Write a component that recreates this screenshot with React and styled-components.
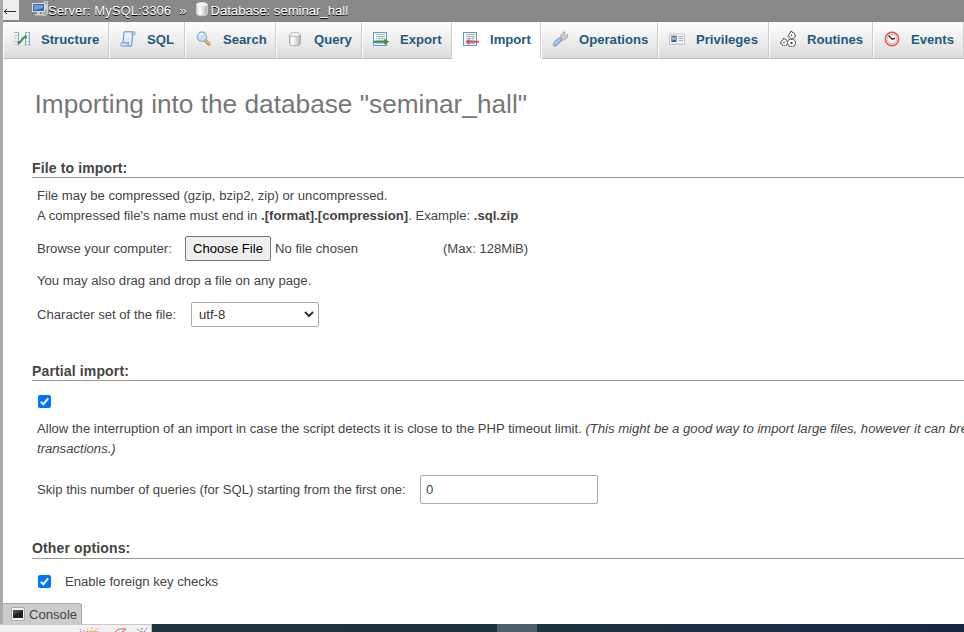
import React from "react";
import styled, { createGlobalStyle } from "styled-components";

const Global = createGlobalStyle`
  * { box-sizing: border-box; }
  html, body { margin: 0; padding: 0; overflow: hidden; background: #fff; }
  body { font-family: "Liberation Sans", Arial, sans-serif; font-size: 13.12px; color: #444; }
`;

const Page = styled.div`
  width: 964px;
  height: 632px;
  display: flex;
  flex-direction: column;
  overflow: hidden;
`;
const Frame = styled.div`
  height: 624px;
  flex: none;
  display: flex;
  flex-direction: column;
  border-left: 3px solid #aaa;
  overflow: hidden;
`;
const ServerBar = styled.header`
  height: 22px;
  flex: none;
  display: flex;
  align-items: flex-start;
  background: #888;
  color: #fff;
  text-shadow: 0 1px 0 #000;
`;
const Back = styled.span`
  width: 16px;
  height: 20px;
  background: #eee;
  display: flex;
  align-items: center;
  justify-content: flex-start;
  padding-top: 3px;
`;
const Crumb = styled.span`
  display: flex;
  align-items: flex-start;
  margin-left: ${(p) => p.$gap}px;
  line-height: 21px;
  letter-spacing: ${(p) => p.$track || 0}px;
  white-space: nowrap;
  svg { margin-top: 1px; flex: none; }
`;
const Tabs = styled.nav`
  height: 37px;
  flex: none;
  display: flex;
`;
const Tab = styled.a`
  width: ${(p) => p.$w}px;
  flex: none;
  display: flex;
  align-items: center;
  gap: 11px;
  padding: 0 0 2px 10px;
  border-left: 1px solid #fff;
  border-right: 1px solid #ccc;
  border-bottom: 1px solid ${(p) => (p.$active ? "#fff" : "#bbb")};
  background: ${(p) => (p.$active ? "#fff" : "linear-gradient(#fff, #dcdcdc)")};
  color: #235a81;
  font-weight: bold;
  white-space: nowrap;
  svg { flex: none; width: 16px; }
`;
const Content = styled.main`
  flex: 1;
  display: flex;
  flex-direction: column;
  padding-left: 29px;
  white-space: nowrap;
`;
const Title = styled.h2`
  margin: 29px 0 0 2.5px;
  height: 32px;
  line-height: 32px;
  font-size: 26.24px;
  font-weight: normal;
  color: #777;
`;
const Section = styled.h3`
  margin: ${(p) => p.$top}px 0 0;
  height: ${(p) => p.$h || 19}px;
  line-height: 18px;
  font-size: 14px;
  letter-spacing: 0.14px;
  color: #444;
  border-bottom: 1px solid #999;
`;
const Row = styled.div`
  display: flex;
  align-items: center;
  height: ${(p) => p.$h || 20}px;
  margin: ${(p) => p.$top || 0}px 0 0 5px;
`;
const Text = styled.span`
  width: ${(p) => (p.$w ? `${p.$w}px` : "auto")};
  flex: none;
`;
const FileButton = styled.button`
  width: 86px;
  height: 25px;
  padding: 0;
  margin-right: 4px;
  border: 1px solid #767676;
  border-radius: 2px;
  background: #efefef;
  color: #000;
  font: 13.12px "Liberation Sans", Arial, sans-serif;
`;
const SelectBox = styled.div`
  width: 128px;
  height: 25px;
  display: flex;
  align-items: center;
  justify-content: space-between;
  padding: 0 3px 0 7px;
  border: 1px solid #aaa;
  border-radius: 2px;
  color: #333;
  svg { margin-bottom: 1px; }
`;
const NumberInput = styled.input`
  width: 178px;
  height: 29px;
  padding: 0 5px;
  border: 1px solid #aaa;
  border-radius: 2px;
  font: 13.12px "Liberation Sans", Arial, sans-serif;
  color: #444;
`;
const CheckMark = styled.span`
  width: 13px;
  height: 13px;
  margin: 0 14px 0 1px;
  display: flex;
  border-radius: 2px;
  background: #0075ff;
`;
const Console = styled.footer`
  width: 79px;
  height: 21px;
  flex: none;
  display: flex;
  align-items: center;
  padding-left: 8px;
  gap: 4px;
  background: #ccc;
  border-top: 1px solid #aaa;
  border-right: 1px solid #aaa;
  border-radius: 0 3px 0 0;
  white-space: nowrap;
`;
const Taskbar = styled.div`
  height: 8px;
  flex: none;
  display: flex;
  background: linear-gradient(90deg, #1f3640 0, #1c3340 60%, #192b45 90%, #18263f);
`;
const SearchStrip = styled.div`
  width: 152px;
  height: 8px;
  background: #f1f1f1;
  border-top: 1px solid #c8c8c8;
  border-right: 1px solid #bbb;
  svg { display: block; margin-left: 76px; }
`;
const ActiveTask = styled.div`
  width: 40px;
  margin-left: 345px;
  background: #4c5f68;
`;

const Icon = ({ children, w = 16, h = 16, box }) => (
  <svg width={w} height={h} viewBox={box || `0 0 ${w} ${h}`} fill="none">{children}</svg>
);

const Cylinder = ({ light }) => (
  <Icon>
    <defs>
      <linearGradient id="metal" x1="0" x2="1">
        <stop offset="0" stopColor="#d5d5d5" /><stop offset=".3" stopColor="#fff" />
        <stop offset=".65" stopColor="#d8d8d8" /><stop offset="1" stopColor="#aaa" />
      </linearGradient>
    </defs>
    <path d="M2.500 3.500v9c0 3 11 3 11 0v-9z" fill="url(#metal)" stroke={light ? "#ccc" : "#aaa"} />
    <ellipse cx="8" cy="3.500" rx="5.500" ry="2" fill="#f4f4f4" stroke={light ? "#ddd" : "#b5b5b5"} />
  </Icon>
);
const ServerIcon = () => (
  <Icon>
    <path d="M10.500 2.500l2-2h3v12l-2 2h-3z" fill="#aaa" stroke="#ccc" />
    <path d="M12 4h3M12 6h3M12 8h3" stroke="#eee" />
    <rect x=".5" y="2.500" width="12" height="8" fill="#3569b0" stroke="#ddd" />
    <path d="M2 4h9v3L2 9z" fill="#6f9ed8" />
    <path d="M5 11h3v2H5zM3 13h7v1.500H3z" fill="#ccc" />
  </Icon>
);
const StructureIcon = () => (
  <Icon>
    <path d="M0 1.500h4.500M11.500 1.500H16" stroke="#8dc872" />
    <path d="M0 4.500h4M0 7.500h4M0 10.500h4M0 13.500h4M12 4.500h4M12 7.500h4M12 10.500h4M12 13.500h4" stroke="#b9cfeb" />
    <path d="M4.500 1v14M11.500 1v14M15.500 1v14" stroke="#86a9d6" />
    <path d="M4.500 11.500c4 0 3-5.500 7-5.500" stroke="#42934b" strokeWidth="2.200" />
    <circle cx="5" cy="11.500" r="1.600" fill="#42934b" /><circle cx="11.500" cy="6" r="1.600" fill="#42934b" />
  </Icon>
);
const SqlIcon = () => (
  <Icon>
    <path d="M4 .8h9.500c2.300 0 2 3.200 0 3.200h-.8l-1.200 11H2.200c-2.300 0-2-3.200 0-3.200H3z" fill="#dcecfb" stroke="#5b91cf" />
    <path d="M3 11.800h6c-1.200 1-1 2.500.5 3.200M13 1c-1.500 1-1 3 .5 3" fill="#b8d6f3" stroke="#5b91cf" />
    <path d="M5 3h5M5 5h6" stroke="#fff" />
  </Icon>
);
const SearchIcon = () => (
  <Icon>
    <path d="M9.500 9.500l3.500 3.500" stroke="#c38d4c" strokeWidth="3.400" strokeLinecap="round" />
    <path d="M10 9.500l3.500 3.500" stroke="#efc07a" strokeWidth="1.500" strokeLinecap="round" />
    <circle cx="6" cy="5.700" r="4.700" fill="#c5def7" stroke="#8bb5e4" strokeWidth="1.300" />
    <path d="M3.500 5c.6-2 2-2.500 3.500-2.200" stroke="#fff" strokeWidth="1.500" />
  </Icon>
);
const TransferIcon = ({ incoming }) => (
  <Icon>
    <rect x=".5" y="1.500" width="13" height="13" fill="#f1f7ff" stroke="#6794d4" />
    <path d="M3 3.500h9M3 5.500h9" stroke="#96c58a" />
    <path d="M3 7.500h9M3 9.500h9M3 12.500h9M6.500 6v7M9.500 6v7" stroke="#a9c6e9" />
    {incoming ? (
      <path d="M2.500 10.700L6.500 7.500V9.800H16v2H6.500v2.300z" fill="#f04a4e" />
    ) : (
      <path d="M1 9.800h10.500V7.500l4.500 3.300-4.500 3.300v-2.300H1z" fill="#3f8b38" />
    )}
  </Icon>
);
const WrenchIcon = () => (
  <Icon>
    <path d="M8 8L9 3.500 12 1h1.500L12 3.800l1.300 1.300L16 3v3l-3 2.500-3 .7z" fill="#ccc" stroke="#a0a0a0" strokeWidth=".8" />
    <path d="M3.200 13.200l4.500-4.500" stroke="#6c91d7" strokeWidth="4.600" strokeLinecap="round" />
    <path d="M3 13l4.700-4.500" stroke="#a9c7f5" strokeWidth="2.800" strokeLinecap="round" />
  </Icon>
);
const CardIcon = () => (
  <Icon>
    <rect x=".5" y="3" width="15" height="10.500" fill="#f7f7f7" stroke="#c8c8c8" />
    <rect x="2" y="4.500" width="6" height="6.500" fill="#6aa2df" />
    <circle cx="5" cy="7" r="1.600" fill="#ecc19b" /><path d="M3 11c0-3 4-3 4 0z" fill="#285b9e" /><path d="M3.500 6.500c0-2 3-2 3 0" fill="#755038" />
    <path d="M9.500 5.500H14M9.500 7.500H14M9.500 9.500H14" stroke="#91b2d7" />
    <path d="M2 12.500h12" stroke="#ddd" />
  </Icon>
);
const GearsIcon = () => (
  <Icon>
    <g fill="#fff" stroke="#555" strokeWidth="1" strokeDasharray="1.500 .6">
      <path d="M10.500.5h2V2h2v2h1v2h-1.500v1.500h-4V6H8V4h1.500V2h1z" />
      <path d="M3 7.500h2V9h2v2h1v2H6.500v1.500h-4V13H.5v-2H2V9h1z" />
      <path d="M9 8.500h5V10h1.500v4H14v1.500H9V14H7.500v-4H9z" />
    </g>
    <g fill="#444"><path d="M10.500 4.500l1-1 1 1-1 1zM3 11.500l1-1 1 1-1 1z" /><path d="M10.500 11h2v2h-2z" /></g>
  </Icon>
);
const ClockIcon = () => (
  <Icon>
    <circle cx="8" cy="8" r="6.700" fill="#f3f3f3" stroke="#e65353" strokeWidth="1.500" />
    <circle cx="8" cy="8" r="4.800" stroke="#bbb" />
    <path d="M4.500 4.500L8 8l3-.5" stroke="#333" strokeWidth="1.300" /><circle cx="8.500" cy="8" r="1" fill="#b33" />
  </Icon>
);
const Check = () => (
  <CheckMark role="checkbox" aria-checked="true">
    <Icon w={13} h={13}><path d="M2.800 6.900l2.400 2.400 5-6" stroke="#fff" strokeWidth="2" /></Icon>
  </CheckMark>
);

const tabs = [
  ["Structure", 106, StructureIcon],
  ["SQL", 76, SqlIcon],
  ["Search", 91, SearchIcon],
  ["Query", 86, Cylinder],
  ["Export", 90, TransferIcon],
  ["Import", 89, TransferIcon],
  ["Operations", 117, WrenchIcon],
  ["Privileges", 111, CardIcon],
  ["Routines", 104, GearsIcon],
  ["Events", 91, ClockIcon],
];

export default function App() {
  return (
    <>
      <Global />
      <Page>
        <Frame>
          <ServerBar>
            <Back><Icon w={15} h={12}><path d="M1 5.500h12M4 3L1.200 5.500 4 8" stroke="#333" /></Icon></Back>
            <Crumb $gap={13} $track={0.04}><ServerIcon />Server: MySQL:3306</Crumb>
            <Crumb $gap={8}>»</Crumb>
            <Crumb $gap={8}><Cylinder light />Database: seminar_hall</Crumb>
          </ServerBar>
          <Tabs>
            {tabs.map(([name, width, Glyph]) => (
              <Tab key={name} $w={width} $active={name === "Import"}>
                <Glyph incoming={name === "Import"} />{name}
              </Tab>
            ))}
          </Tabs>
          <Content>
            <Title>Importing into the database "seminar_hall"</Title>
            <Section $top={39}>File to import:</Section>
            <Row $top={7}><Text>File may be compressed (gzip, bzip2, zip) or uncompressed.</Text></Row>
            <Row><Text>A compressed file's name must end in <b>.[format].[compression]</b>. Example: <b>.sql.zip</b></Text></Row>
            <Row $top={11} $h={25}>
              <Text $w={148}>Browse your computer:</Text>
              <FileButton>Choose File</FileButton>
              <Text $w={168}>No file chosen</Text>
              <Text>(Max: 128MiB)</Text>
            </Row>
            <Row $top={9}><Text>You may also drag and drop a file on any page.</Text></Row>
            <Row $top={12} $h={25}>
              <Text $w={154}>Character set of the file:</Text>
              <SelectBox>utf-8<Icon w={12} h={12}><path d="M2 4l4 4 4-4" stroke="#333" strokeWidth="2" /></Icon></SelectBox>
            </Row>
            <Section $top={35}>Partial import:</Section>
            <Row $top={14} $h={13}><Check /></Row>
            <Row $top={10}><Text>Allow the interruption of an import in case the script detects it is close to the PHP timeout limit. <i>(This might be a good way to import large files, however it can break</i></Text></Row>
            <Row><Text><i>transactions.)</i></Text></Row>
            <Row $top={17} $h={29}>
              <Text $w={383}>Skip this number of queries (for SQL) starting from the first one:</Text>
              <NumberInput defaultValue="0" />
            </Row>
            <Section $top={35} $h={20}>Other options:</Section>
            <Row $top={12}><Check />Enable foreign key checks</Row>
          </Content>
          <Console>
            <Icon w={14} h={14}><path d="M.5.5h13v13H.5z" fill="#f5f5f5" stroke="#aaa" /><path d="M2 3h10v8H2z" fill="#222" /><path d="M2 3h10L2 8z" fill="#484848" /></Icon>
            Console
          </Console>
        </Frame>
        <Taskbar>
          <SearchStrip>
            <Icon w={76} h={7}>
              <path d="M4 4l1 3M7 5l2 2" stroke="#d63be0" strokeDasharray="1 1" /><path d="M11 4l3 3M16 2v5M22 3l-4 4M10 6.500h13" stroke="#f3a34c" strokeDasharray="2 1" />
              <path d="M39 7c4-4 7-3 11-3l-4 3" stroke="#dd4567" />
              <path d="M61 4l4 3M66 3v4M71 3l-3 4" stroke="#8d69c9" strokeDasharray="2 1" />
            </Icon>
          </SearchStrip>
          <ActiveTask />
        </Taskbar>
      </Page>
    </>
  );
}
